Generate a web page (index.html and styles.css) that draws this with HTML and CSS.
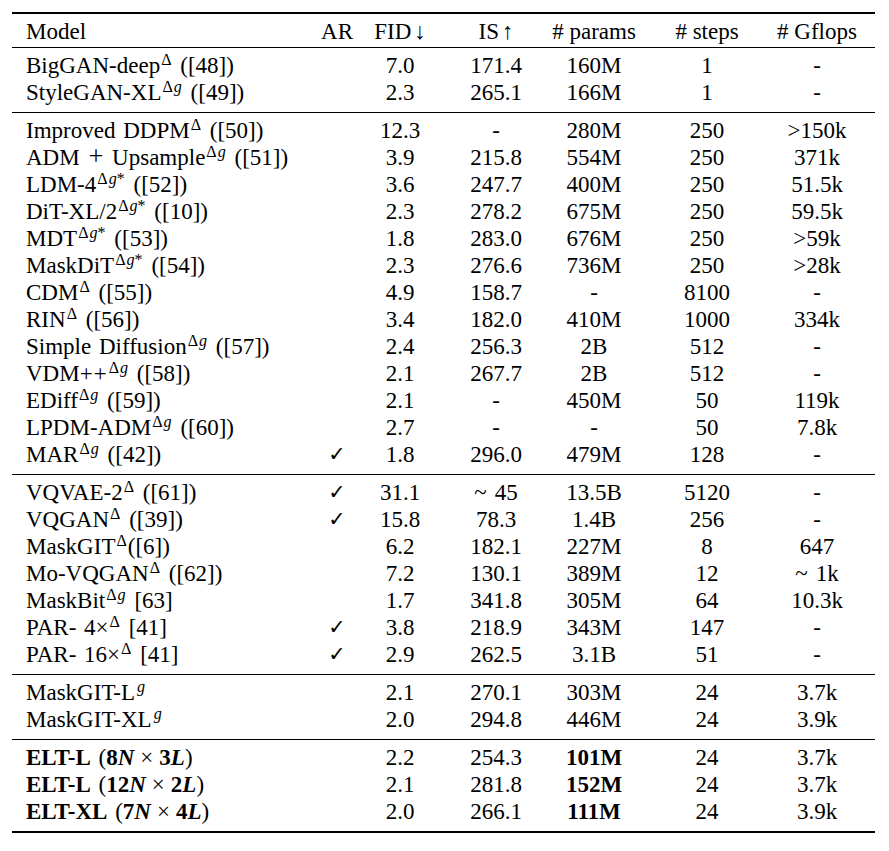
FILE: index.html
```html
<!DOCTYPE html>
<html>
<head>
<meta charset="utf-8">
<link rel="stylesheet" href="styles.css">
</head>
<body>
<div class="tbl">
  <div class="row hdr">
    <div class="c m">Model</div><div class="c">AR</div><div class="c">FID <span class="ar">↓</span></div><div class="c">IS <span class="ar">↑</span></div><div class="c"># params</div><div class="c"># steps</div><div class="c"># Gflops</div>
  </div>
  <div class="group">
    <div class="row"><div class="c m">BigGAN-deep<sup>Δ</sup> ([48])</div><div class="c"></div><div class="c">7.0</div><div class="c">171.4</div><div class="c">160M</div><div class="c">1</div><div class="c">-</div></div>
    <div class="row"><div class="c m">StyleGAN-XL<sup>Δ<i>g</i></sup> ([49])</div><div class="c"></div><div class="c">2.3</div><div class="c">265.1</div><div class="c">166M</div><div class="c">1</div><div class="c">-</div></div>
  </div>
  <div class="group">
    <div class="row"><div class="c m">Improved DDPM<sup>Δ</sup> ([50])</div><div class="c"></div><div class="c">12.3</div><div class="c">-</div><div class="c">280M</div><div class="c">250</div><div class="c">&gt;150k</div></div>
    <div class="row"><div class="c m">ADM <span class="pl">+</span> Upsample<sup>Δ<i>g</i></sup> ([51])</div><div class="c"></div><div class="c">3.9</div><div class="c">215.8</div><div class="c">554M</div><div class="c">250</div><div class="c">371k</div></div>
    <div class="row"><div class="c m">LDM-4<sup>Δ<i>g</i>*</sup> ([52])</div><div class="c"></div><div class="c">3.6</div><div class="c">247.7</div><div class="c">400M</div><div class="c">250</div><div class="c">51.5k</div></div>
    <div class="row"><div class="c m">DiT-XL/2<sup>Δ<i>g</i>*</sup> ([10])</div><div class="c"></div><div class="c">2.3</div><div class="c">278.2</div><div class="c">675M</div><div class="c">250</div><div class="c">59.5k</div></div>
    <div class="row"><div class="c m">MDT<sup>Δ<i>g</i>*</sup> ([53])</div><div class="c"></div><div class="c">1.8</div><div class="c">283.0</div><div class="c">676M</div><div class="c">250</div><div class="c">&gt;59k</div></div>
    <div class="row"><div class="c m">MaskDiT<sup>Δ<i>g</i>*</sup> ([54])</div><div class="c"></div><div class="c">2.3</div><div class="c">276.6</div><div class="c">736M</div><div class="c">250</div><div class="c">&gt;28k</div></div>
    <div class="row"><div class="c m">CDM<sup>Δ</sup> ([55])</div><div class="c"></div><div class="c">4.9</div><div class="c">158.7</div><div class="c">-</div><div class="c">8100</div><div class="c">-</div></div>
    <div class="row"><div class="c m">RIN<sup>Δ</sup> ([56])</div><div class="c"></div><div class="c">3.4</div><div class="c">182.0</div><div class="c">410M</div><div class="c">1000</div><div class="c">334k</div></div>
    <div class="row"><div class="c m">Simple Diffusion<sup>Δ<i>g</i></sup> ([57])</div><div class="c"></div><div class="c">2.4</div><div class="c">256.3</div><div class="c">2B</div><div class="c">512</div><div class="c">-</div></div>
    <div class="row"><div class="c m">VDM<span class="pp">++</span><sup>Δ<i>g</i></sup> ([58])</div><div class="c"></div><div class="c">2.1</div><div class="c">267.7</div><div class="c">2B</div><div class="c">512</div><div class="c">-</div></div>
    <div class="row"><div class="c m">EDiff<sup>Δ<i>g</i></sup> ([59])</div><div class="c"></div><div class="c">2.1</div><div class="c">-</div><div class="c">450M</div><div class="c">50</div><div class="c">119k</div></div>
    <div class="row"><div class="c m">LPDM-ADM<sup>Δ<i>g</i></sup> ([60])</div><div class="c"></div><div class="c">2.7</div><div class="c">-</div><div class="c">-</div><div class="c">50</div><div class="c">7.8k</div></div>
    <div class="row"><div class="c m">MAR<sup>Δ<i>g</i></sup> ([42])</div><div class="c ck">✓</div><div class="c">1.8</div><div class="c">296.0</div><div class="c">479M</div><div class="c">128</div><div class="c">-</div></div>
  </div>
  <div class="group">
    <div class="row"><div class="c m">VQVAE-2<sup>Δ</sup> ([61])</div><div class="c ck">✓</div><div class="c">31.1</div><div class="c"><span class="sim">~</span>45</div><div class="c">13.5B</div><div class="c">5120</div><div class="c">-</div></div>
    <div class="row"><div class="c m">VQGAN<sup>Δ</sup> ([39])</div><div class="c ck">✓</div><div class="c">15.8</div><div class="c">78.3</div><div class="c">1.4B</div><div class="c">256</div><div class="c">-</div></div>
    <div class="row"><div class="c m">MaskGIT<sup>Δ</sup>([6])</div><div class="c"></div><div class="c">6.2</div><div class="c">182.1</div><div class="c">227M</div><div class="c">8</div><div class="c">647</div></div>
    <div class="row"><div class="c m">Mo-VQGAN<sup>Δ</sup> ([62])</div><div class="c"></div><div class="c">7.2</div><div class="c">130.1</div><div class="c">389M</div><div class="c">12</div><div class="c"><span class="sim">~</span>1k</div></div>
    <div class="row"><div class="c m">MaskBit<sup>Δ<i>g</i></sup> [63]</div><div class="c"></div><div class="c">1.7</div><div class="c">341.8</div><div class="c">305M</div><div class="c">64</div><div class="c">10.3k</div></div>
    <div class="row"><div class="c m">PAR- 4×<sup>Δ</sup> [41]</div><div class="c ck">✓</div><div class="c">3.8</div><div class="c">218.9</div><div class="c">343M</div><div class="c">147</div><div class="c">-</div></div>
    <div class="row"><div class="c m">PAR- 16×<sup>Δ</sup> [41]</div><div class="c ck">✓</div><div class="c">2.9</div><div class="c">262.5</div><div class="c">3.1B</div><div class="c">51</div><div class="c">-</div></div>
  </div>
  <div class="group">
    <div class="row"><div class="c m">MaskGIT-L<sup><i>g</i></sup></div><div class="c"></div><div class="c">2.1</div><div class="c">270.1</div><div class="c">303M</div><div class="c">24</div><div class="c">3.7k</div></div>
    <div class="row"><div class="c m">MaskGIT-XL<sup><i>g</i></sup></div><div class="c"></div><div class="c">2.0</div><div class="c">294.8</div><div class="c">446M</div><div class="c">24</div><div class="c">3.9k</div></div>
  </div>
  <div class="group">
    <div class="row"><div class="c m"><b>ELT-L</b> <span class="p">(</span><b>8<i>N</i></b><span class="x">×</span><b>3<i>L</i></b><span class="p">)</span></div><div class="c"></div><div class="c">2.2</div><div class="c">254.3</div><div class="c"><b>101M</b></div><div class="c">24</div><div class="c">3.7k</div></div>
    <div class="row"><div class="c m"><b>ELT-L</b> <span class="p">(</span><b>12<i>N</i></b><span class="x">×</span><b>2<i>L</i></b><span class="p">)</span></div><div class="c"></div><div class="c">2.1</div><div class="c">281.8</div><div class="c"><b>152M</b></div><div class="c">24</div><div class="c">3.7k</div></div>
    <div class="row"><div class="c m"><b>ELT-XL</b> <span class="p">(</span><b>7<i>N</i></b><span class="x">×</span><b>4<i>L</i></b><span class="p">)</span></div><div class="c"></div><div class="c">2.0</div><div class="c">266.1</div><div class="c"><b>111M</b></div><div class="c">24</div><div class="c">3.9k</div></div>
  </div>
</div>
</body>
</html>
```
FILE: styles.css
```css
html, body {
  margin: 0;
  padding: 0;
  background: #ffffff;
}
body {
  font-family: "Liberation Serif", "DejaVu Serif", serif;
  font-size: 23px;
  color: #000000;
}
.tbl {
  margin: 12px 0 0 12px;
  width: 863px;
  border-top: 2px solid #000;
  border-bottom: 2px solid #000;
}
.hdr {
  padding: 6px 0 4px 0;
}
.group {
  border-top: 1px solid #000;
  padding: 6px 0 4px 0;
}
.row {
  display: grid;
  grid-template-columns: 295px 60px 66px 126px 70px 156px 64px 26px;
  line-height: 23px;
  padding-bottom: 4px;
}
.c {
  display: flex;
  justify-content: center;
  white-space: nowrap;
}
.c.m {
  display: block;
  padding-left: 14px;
  word-spacing: 2px;
}
sup {
  font-size: 0.7em;
  line-height: 0;
  vertical-align: 0.52em;
  margin-left: 1px;
  margin-right: 1px;
  word-spacing: 0;
}
sup i {
  font-style: italic;
  margin-left: 1px;
}
.pl {
  font-size: 1.15em;
  line-height: 0;
  padding: 0 1px;
}
.pp {
  letter-spacing: 1px;
}
.ar {
  font-size: 1em;
  margin-left: 3px;
}
.ck {
  font-family: "DejaVu Sans", sans-serif;
  font-size: 0.9em;
}
.sim {
  margin-right: 8px;
}
.p {
  font-weight: normal;
}
.x {
  font-weight: normal;
  padding: 0 6px;
}
b i {
  font-style: italic;
  font-weight: bold;
}
```
